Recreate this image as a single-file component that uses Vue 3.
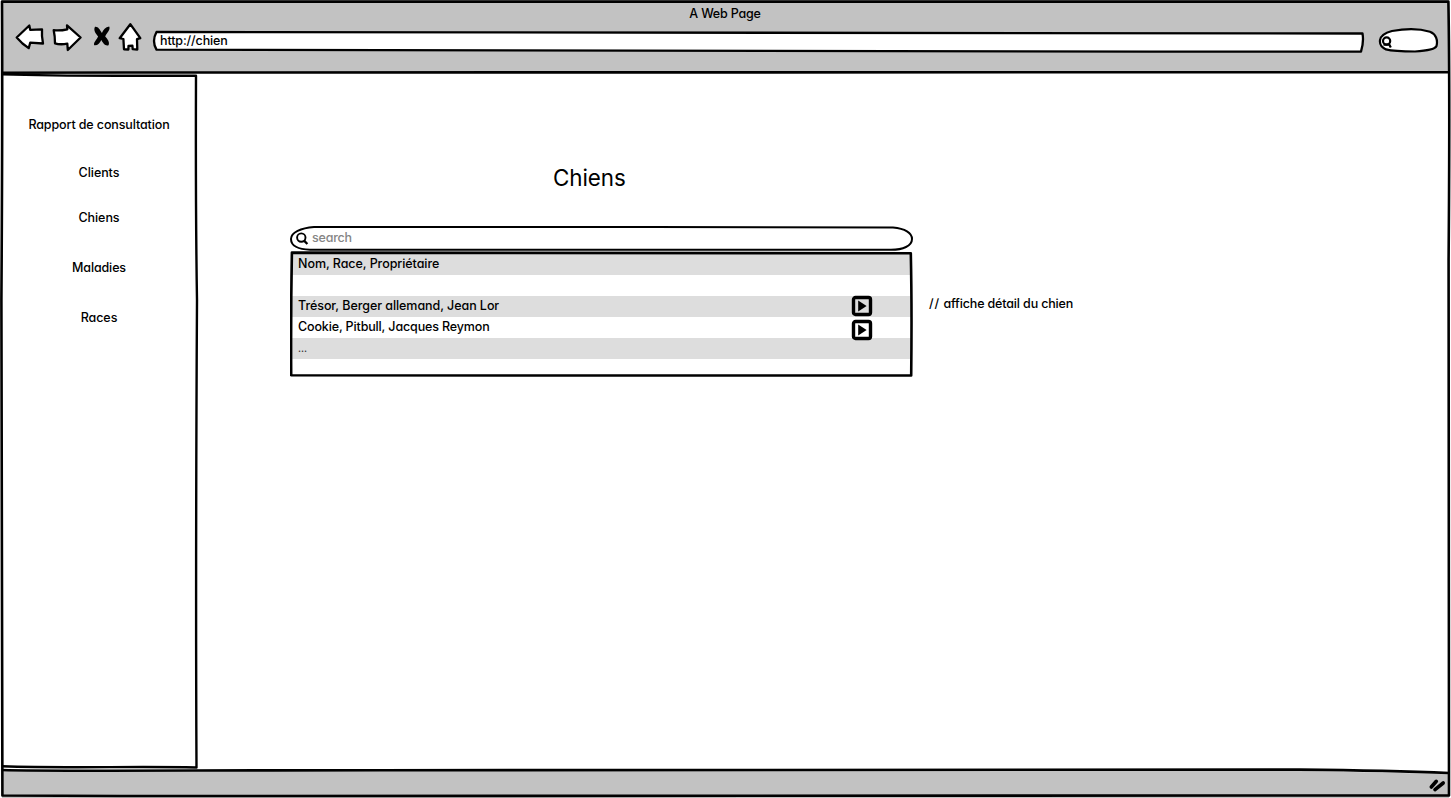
<script setup>
const menu = [
  { label: 'Rapport de consultation', cls: 'report' },
  { label: 'Clients', cls: 'clients' },
  { label: 'Chiens', cls: 'dogs' },
  { label: 'Maladies', cls: 'diseases' },
  { label: 'Races', cls: 'breeds' },
]
const rows = [
  { text: 'Nom, Race, Propriétaire', cls: 'head' },
  { text: '', cls: 'blank' },
  { text: 'Trésor, Berger allemand, Jean Lor', cls: 'first', play: true },
  { text: 'Cookie, Pitbull, Jacques Reymon', cls: 'second', play: true },
  { text: '...', cls: 'more' },
  { text: '', cls: 'last' },
]
</script>

<template>
  <div class="window">
    <header class="chrome">
      <div class="title"><span>A Web Page</span></div>
      <div class="toolbar">
        <svg class="nav" width="154" height="50" viewBox="0 0 154 50">
          <g fill="#fff" stroke="#000" stroke-width="2.3" stroke-linejoin="round" stroke-linecap="round">
            <path d="M16.7 16.5 L29.3 4.5 L30.2 8.8 L42 8.3 Q41.5 15 43 22.5 L30.2 21.7 L28.7 27.2 L22.5 22.5 Z" />
            <path d="M53.7 9.2 Q60 10 67.3 8.3 L67 4.3 L80.6 16.5 L67.8 29 L67.3 22.7 Q60 24 55 22.3 Q55 15 53.7 9.2Z" />
            <path d="M130.3 3.2 L140.3 17.2 L137 18.2 L137.3 28.6 L132.7 28.2 L132.4 24.7 L128.5 24.8 L128.4 28.5 L124 28.3 L123.4 18 L119.7 17.2 Z" />
          </g>
          <path d="M95 5.8 C98 5.3 99.8 8.5 101.9 12 C103.2 9 105.5 6.2 109.2 5.6 C110.9 9 106.4 12.3 105.2 15.5 C107.7 18.2 110 21.5 108.5 24.2 C105 25.2 103 21.8 101.3 18.9 C99.8 22 97.5 24.8 94.2 24.2 C93.2 21.5 97 18.5 98.1 15.5 C95.5 12.3 93.2 9.3 95 5.8Z" />
        </svg>
        <div class="address"><span>http://chien</span>
          <svg class="outline" width="1213" height="24" viewBox="0 0 1213 24">
            <path d="M4.5 2 C250 1 650 2 1210.5 3.5 Q1212 12 1209 21.7 C830 22 480 20 4.5 19.6 Q-0.5 11 4.5 2Z" fill="#fff" stroke="#000" stroke-width="2.3" stroke-linejoin="round" />
          </svg>
        </div>
        <svg class="find" width="62" height="28" viewBox="0 0 62 28">
          <path d="M15 4 C29 1.5 44 2 53 4.7 C59 7 61 13 59.5 19 C58 22.5 49 23.8 38 24.5 C28 24.5 15 24 9 22.4 C1 18.5 -1 8 15 4Z" fill="#fff" stroke="#000" stroke-width="2.2" />
          <circle cx="9.6" cy="14" r="3.6" fill="none" stroke="#000" stroke-width="2.2" />
          <path d="M6.5 17.7 L12.3 17.7 L13.8 20.6" fill="none" stroke="#000" stroke-width="2.2" />
        </svg>
      </div>
    </header>

    <div class="body">
      <nav class="side">
        <a v-for="m in menu" :key="m.label" :class="m.cls"><span>{{ m.label }}</span></a>
      </nav>
      <main class="content">
        <h1><span>Chiens</span></h1>
        <div class="search">
          <svg class="outline" width="624" height="28" viewBox="0 0 624 28">
            <path d="M24 3 C180 2.2 420 3.4 603 3.5 C615 4.5 622 9 622 15 C622 22 613 25.7 601 25.8 C410 26.3 210 25 20 25.7 C8 25.5 1 21.5 1 15 C1 8.2 11 4 24 3Z" fill="#fff" stroke="#000" stroke-width="2" />
            <circle cx="11.3" cy="13.6" r="4.2" fill="none" stroke="#000" stroke-width="1.9" />
            <path d="M14.3 16.9 L17.4 20" stroke="#000" stroke-width="2.3" />
          </svg>
          <span>search</span>
        </div>
        <div class="listing">
          <div class="table">
            <div v-for="(r, i) in rows" :key="i" class="row" :class="r.cls">
              <span>{{ r.text }}</span>
              <svg v-if="r.play" class="play" width="22" height="22" viewBox="0 0 22 22">
                <rect x="2.5" y="2.5" width="17" height="17" rx="2" fill="none" stroke="#000" stroke-width="3.4" />
                <path d="M7.2 5.6 L15.6 11 L7.2 16.4Z" />
              </svg>
            </div>
            <svg class="outline" width="624" height="128" viewBox="0 0 624 128" fill="none" stroke="#000" stroke-linejoin="round">
              <path d="M1.9 1.6 C170 1.2 380 3.6 620.8 2.3 Q622 55 621.2 124.4 C400 123.6 230 125.8 1.2 124.2 Q0.8 60 1.9 1.6Z" stroke-width="2.6" />
            </svg>
          </div>
          <p class="note"><span><span class="slashes">//</span> affiche détail du chien</span></p>
        </div>
      </main>
    </div>

    <footer class="status"></footer>

    <svg class="frame" width="1451" height="798" viewBox="0 0 1451 798" fill="none" stroke="#000" stroke-width="2.6" stroke-linejoin="round">
      <path d="M2 1.6 L1448.4 1.6 Q1450 90 1448.6 260 L1449 795.5 C1000 796.5 450 794 120 796 L2.4 795.5 Q2.5 500 1.4 300 Q2.6 120 2 1.6Z" />
      <path d="M2 72.7 C400 71.7 760 74 1448 72.2" />
      <path d="M2 74.4 C70 76.6 130 75.5 196 75.7 Q195.5 210 197 300 Q195.5 570 196.5 767.5 C135 766 70 768.5 2 766.3" stroke-width="2.4" />
      <path d="M2 770 C50 771.5 170 770.3 380 770.2 C700 771.5 1000 769.5 1300 769.6 Q1390 770.5 1449 773" />
      <path d="M1431.3 787 L1436.3 781.3 M1435 789.6 L1443.2 783" stroke-width="3.6" stroke-linecap="round" />
    </svg>
  </div>
</template>

<style>
body { margin: 0; background: #fff; overflow: hidden; }
</style>

<style scoped>
.window {
  position: relative; width: 1451px; height: 798px; display: flex; flex-direction: column;
  font-family: Inter, "Noto Sans", sans-serif; font-feature-settings: "cv11" 1;
  font-size: 12.5px; font-weight: 450; letter-spacing: -0.06px; line-height: 20px; color: #000; background: #fff; white-space: nowrap; overflow: hidden;
}
.frame { position: absolute; inset: 0; pointer-events: none; }
.chrome { height: 72px; background: #c2c2c2; margin-left: 2px; margin-right: 2px; flex: none; }
.title { padding: 4px 1px 0 0; text-align: center; height: 17px; letter-spacing: -0.2px; }
.toolbar { display: flex; height: 50px; }
.nav { flex: none; }
.nav { margin-left: -2px; }
.address { position: relative; width: 1212px; height: 24px; margin: 9px 0 0 -2px; box-sizing: border-box; padding: 1px 0 0 8px; letter-spacing: -0.12px; }
.address span { position: relative; z-index: 1; }
.outline { position: absolute; left: 0; top: 0; }
.find { margin: 6px 0 0 13px; }
.body { flex: 1; display: flex; }
.side { width: 197px; box-sizing: border-box; padding: 43px 0 0 1px; display: flex; flex-direction: column; align-items: center; }
.side a { height: 20px; }
.side .clients { margin-top: 28px; }
.side .dogs { margin-top: 25px; }
.side .diseases, .side .breeds { margin-top: 30px; }
.side .report, .side .diseases { letter-spacing: -0.12px; }
.content { flex: 1; padding: 90px 0 0 93px; }
h1 { margin: 0 0 0 263px; font-size: 22.4px; line-height: 32px; font-weight: 400; height: 62px; }
.search { position: relative; width: 624px; height: 27px; color: #858585; }
.search span { position: relative; display: block; padding: 4px 0 0 22px; letter-spacing: -0.2px; }
.listing { display: flex; }
.table { position: relative; width: 624px; height: 128px; box-sizing: border-box; padding: 3px 3px 0 2px; }
.row { display: flex; height: 21px; box-sizing: border-box; padding-left: 6px; align-items: flex-start; line-height: 19px; }
.row:nth-child(odd) { background: #ddd; }
.row .play { margin-left: auto; margin-right: 38px; margin-top: -1px; flex: none; z-index: 1; }
.row.second { letter-spacing: -0.14px; }
.row.second .play { margin-top: 2px; }
.row.last { height: 16px; }
.row.more { color: #333; font-size: 10px; line-height: 21px; }
.note { margin: 43px 0 0 15px; letter-spacing: -0.15px; }
.slashes { letter-spacing: 1px; }
.status { flex: none; height: 27px; margin: 0 2px; background: #c2c2c2; clip-path: polygon(0 0, 90% 0, 100% 3px, 100% 100%, 0 100%); }
</style>
